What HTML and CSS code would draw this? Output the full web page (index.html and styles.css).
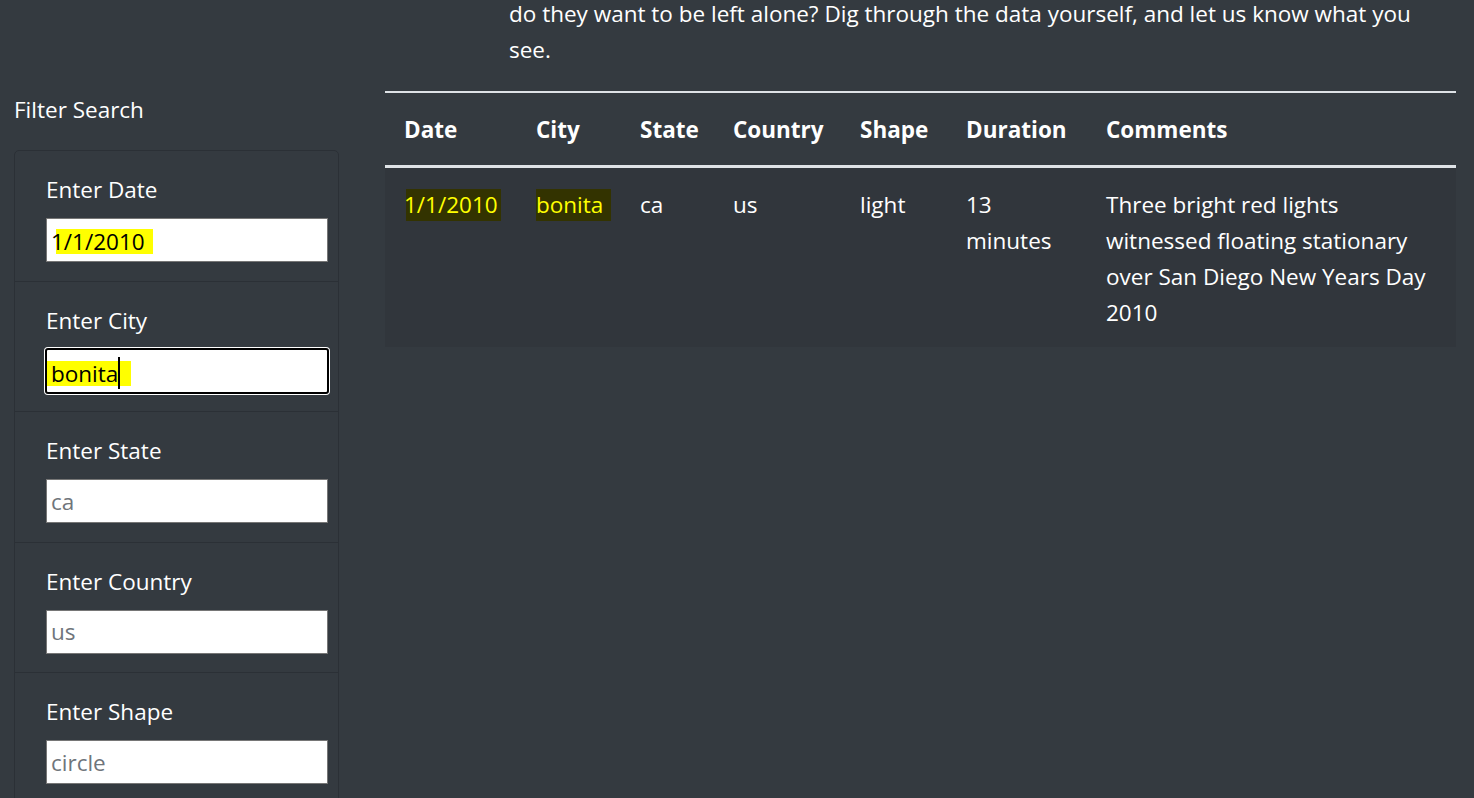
FILE: index.html
```html
<!DOCTYPE html>
<html lang="en">
<head>
<meta charset="utf-8">
<title>UFO Sightings</title>
<link rel="stylesheet" href="styles.css">
</head>
<body>
  <section class="intro">
    <p class="intro-text">do they want to be left alone? Dig through the data yourself, and let us know what you<br>see.</p>
  </section>
  <main class="content">
    <aside class="sidebar">
      <h2 class="sidebar-title">Filter Search</h2>
      <ul class="filters">
        <li class="filter-item">
          <label class="filter-label">Enter Date</label>
          <div class="field-input filled"><span class="hl hl-date">1/1/2010</span></div>
        </li>
        <li class="filter-item">
          <label class="filter-label">Enter City</label>
          <div class="field-input filled focused"><span class="hl hl-city">bonita<span class="caret"></span></span></div>
        </li>
        <li class="filter-item">
          <label class="filter-label" for="state">Enter State</label>
          <input class="field-input" id="state" type="text" placeholder="ca">
        </li>
        <li class="filter-item">
          <label class="filter-label" for="country">Enter Country</label>
          <input class="field-input" id="country" type="text" placeholder="us">
        </li>
        <li class="filter-item">
          <label class="filter-label" for="shape">Enter Shape</label>
          <input class="field-input" id="shape" type="text" placeholder="circle">
        </li>
      </ul>
    </aside>
    <section class="results">
      <table class="ufo-table">
        <colgroup>
          <col class="c-date"><col class="c-city"><col class="c-state"><col class="c-country"><col class="c-shape"><col class="c-duration"><col class="c-comments">
        </colgroup>
        <thead>
          <tr>
            <th>Date</th><th>City</th><th>State</th><th>Country</th><th>Shape</th><th>Duration</th><th>Comments</th>
          </tr>
        </thead>
        <tbody>
          <tr>
            <td><span class="cell-hl cell-hl-date">1/1/2010</span></td>
            <td><span class="cell-hl cell-hl-city">bonita</span></td>
            <td>ca</td>
            <td>us</td>
            <td>light</td>
            <td>13<br>minutes</td>
            <td>Three bright red lights<br>witnessed floating stationary<br>over San Diego New Years Day<br>2010</td>
          </tr>
        </tbody>
      </table>
    </section>
  </main>
</body>
</html>
```

FILE: styles.css
```css
* { box-sizing: border-box; }

html, body {
  margin: 0;
  padding: 0;
  background: #343a40;
  overflow: hidden;
}

body {
  font-family: "Segoe UI", "Open Sans", "Noto Sans", sans-serif;
  font-size: 22.5px;
  line-height: 36px;
  color: #ffffff;
  height: 798px;
}

.intro {
  padding-left: 509px;
  padding-right: 18px;
}

.intro-text {
  margin: -4px 0 0;
  white-space: nowrap;
}

.content {
  display: flex;
  gap: 46px;
  padding: 23px 18px 0 14px;
}

.sidebar {
  width: 325px;
  flex: 0 0 325px;
  padding-top: 1px;
}

.sidebar-title {
  margin: 0 0 22px;
  font-size: 22.5px;
  font-weight: 400;
  line-height: 36px;
}

.filters {
  list-style: none;
  margin: 0;
  padding: 0;
  border: 1px solid #2b3036;
  border-radius: 5px;
}

.filter-item {
  padding: 21px 11px 18.5px 31px;
  border-top: 1px solid #2b3036;
}

.filter-item:first-child {
  border-top: none;
}

.filter-label {
  display: block;
  margin-bottom: 10px;
  line-height: 36px;
}

.field-input {
  display: block;
  width: 282px;
  height: 44px;
  margin: 0;
  padding: 0 4px;
  background: #ffffff;
  border: 1px solid #767676;
  border-radius: 0;
  font-family: inherit;
  font-size: 22.5px;
  line-height: 42px;
  color: #000000;
  outline: none;
}

.field-input::placeholder {
  color: #6f757b;
  opacity: 1;
}

.field-input.focused {
  width: 284px;
  height: 46px;
  margin: -1px 0 -1px -1px;
  border: 2px solid #000000;
  border-radius: 3px;
  box-shadow: 0 0 0 1px #ffffff;
  padding-left: 0;
  line-height: 42px;
}

.hl {
  display: inline-block;
  line-height: 25px;
  vertical-align: middle;
  position: relative;
}

.hl-date {
  padding-right: 8px;
  background: linear-gradient(to right, transparent 5px, #ffff00 5px);
}

.hl-city {
  padding-left: 4px;
  padding-right: 13px;
  background: #ffff00;
  margin-top: 3px;
}

.caret {
  position: absolute;
  right: 11px;
  top: -4px;
  width: 2px;
  height: 32px;
  background: #000000;
}

.results {
  flex: 1 1 auto;
}

.ufo-table {
  width: 100%;
  border-collapse: collapse;
  table-layout: fixed;
}

.c-date { width: 132px; }
.c-city { width: 104px; }
.c-state { width: 93px; }
.c-country { width: 127px; }
.c-shape { width: 106px; }
.c-duration { width: 140px; }

.ufo-table th,
.ufo-table td {
  text-align: left;
  vertical-align: top;
  padding: 19px 19px;
  line-height: 36px;
  white-space: nowrap;
}

.ufo-table thead th {
  font-weight: 700;
  border-top: 2px solid #dee2e6;
  border-bottom: 3px solid #dee2e6;
  padding-top: 19px;
  padding-bottom: 17px;
}

.ufo-table tbody tr {
  background: #31363c;
}

.ufo-table tbody td {
  padding-top: 19px;
  padding-bottom: 16px;
}

.cell-hl {
  display: inline-block;
  color: #ffff00;
  background: #333300;
  line-height: 32px;
}

.cell-hl-date {
  padding-right: 3px;
  background: linear-gradient(to right, transparent 2px, #333300 2px);
}

.cell-hl-city {
  padding-right: 8px;
}
```
